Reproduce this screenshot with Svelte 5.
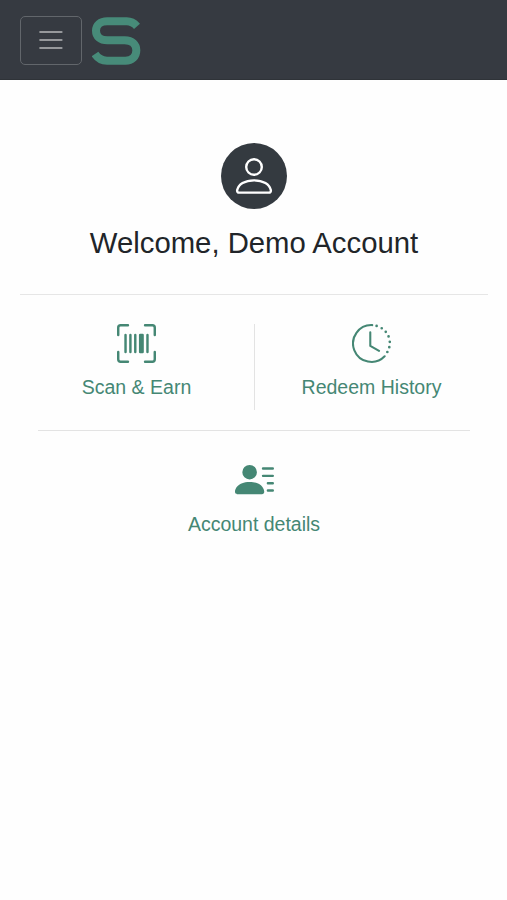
<script lang="ts">
  let name = "Demo Account";
  let menuOpen = false;
</script>

<nav>
  <button type="button" aria-label="Toggle navigation" aria-expanded={menuOpen} on:click={() => (menuOpen = !menuOpen)}>
    <svg viewBox="0 0 30 30" width="36" height="36">
      <path d="M4.8 7.5h20.2M4.8 15h20.2M4.8 22.5h20.2" />
    </svg>
  </button>
  <a class="brand" href="#home" aria-label="Home">
    <svg viewBox="0 0 147 144" width="49" height="48">
      <path d="M135 28C126 18 117 13 104 13H46C24 13 12 25 12 41C12 59 25 70 46 70H98C121 70 133 83 133 100C133 119 120 131 100 131H45C29 131 18 125 9 111" />
    </svg>
  </a>
</nav>

<main>
  <header>
    <div class="avatar">
      <svg viewBox="0 0 16 16" width="48" height="48">
        <circle cx="8" cy="5" r="2.6" />
        <path d="M3.1 13.55C2.55 13.55 2.3 13.2 2.4 12.7C2.8 10.8 4.9 9.45 8 9.45S13.2 10.8 13.6 12.7C13.7 13.2 13.45 13.55 12.9 13.55Z" />
      </svg>
    </div>
    <h1>Welcome, {name}</h1>
  </header>

  <div class="row">
    <a class="tile" href="#scan">
      <svg class="fill" viewBox="0 0 16 16" width="39" height="39">
        <path d="M1.5 1a.5.5 0 0 0-.5.5v3a.5.5 0 0 1-1 0v-3A1.5 1.5 0 0 1 1.5 0h3a.5.5 0 0 1 0 1zM11 .5a.5.5 0 0 1 .5-.5h3A1.5 1.5 0 0 1 16 1.5v3a.5.5 0 0 1-1 0v-3a.5.5 0 0 0-.5-.5h-3a.5.5 0 0 1-.5-.5M.5 11a.5.5 0 0 1 .5.5v3a.5.5 0 0 0 .5.5h3a.5.5 0 0 1 0 1h-3A1.5 1.5 0 0 1 0 14.5v-3a.5.5 0 0 1 .5-.5m15 0a.5.5 0 0 1 .5.5v3a1.5 1.5 0 0 1-1.5 1.5h-3a.5.5 0 0 1 0-1h3a.5.5 0 0 0 .5-.5v-3a.5.5 0 0 1 .5-.5M3 4.5a.5.5 0 0 1 1 0v7a.5.5 0 0 1-1 0zm2 0a.5.5 0 0 1 1 0v7a.5.5 0 0 1-1 0zm2 0a.5.5 0 0 1 1 0v7a.5.5 0 0 1-1 0zm2 0a.5.5 0 0 1 .5-.5h1a.5.5 0 0 1 .5.5v7a.5.5 0 0 1-.5.5h-1a.5.5 0 0 1-.5-.5zm3 0a.5.5 0 0 1 1 0v7a.5.5 0 0 1-1 0z" />
      </svg>
      <span>Scan &amp; Earn</span>
    </a>
    <a class="tile" href="#history">
      <svg class="line" viewBox="0 0 16 16" width="39" height="39">
        <path d="M8.3.45A7.55 7.55 0 1 0 13.4 13.25M7.5 3.4V9l3.6 2" />
        <path class="dots" d="M10.1.8h0M12.2 1.75h0M13.85 3.2h0M15 5.1h0M15.5 7.3h0M15.3 9.5h0M14.5 11.5h0" />
      </svg>
      <span>Redeem History</span>
    </a>
  </div>

  <a class="tile details" href="#account">
    <svg class="fill" viewBox="0 0 16 16" width="39" height="39">
      <path d="M6 8a3 3 0 1 0 0-6 3 3 0 0 0 0 6m-5 6s-1 0-1-1 1-4 6-4 6 3 6 4-1 1-1 1zM11 3.5a.5.5 0 0 1 .5-.5h4a.5.5 0 0 1 0 1h-4a.5.5 0 0 1-.5-.5m.5 2.5a.5.5 0 0 0 0 1h4a.5.5 0 0 0 0-1zm2 3a.5.5 0 0 0 0 1h2a.5.5 0 0 0 0-1zm0 3a.5.5 0 0 0 0 1h2a.5.5 0 0 0 0-1z" />
    </svg>
    <span>Account details</span>
  </a>
</main>

<style>
  :global(body) {
    margin: 0;
    background: #fefefe;
    font-family: "Liberation Sans", Arial, sans-serif;
    color: #212529;
  }

  svg {
    display: block;
    flex: none;
  }

  nav {
    box-sizing: border-box;
    height: 80px;
    padding: 0 20px;
    display: flex;
    align-items: center;
    gap: 10px;
    background-color: #363a41;
    border-bottom: 1px solid #2f3338;
  }
  nav button {
    box-sizing: border-box;
    width: 62px;
    height: 49px;
    margin-top: 1px;
    padding: 0;
    display: flex;
    align-items: center;
    justify-content: center;
    background: none;
    border: 1.5px solid #62666b;
    border-radius: 5px;
    cursor: pointer;
  }
  nav button path {
    stroke: #96989b;
    stroke-width: 1.8;
    stroke-linecap: round;
  }
  nav button svg {
    height: 32px;
  }
  .brand {
    margin-top: 2px;
  }
  .brand path {
    fill: none;
    stroke: #478b79;
    stroke-width: 24;
  }

  main {
    padding: 62px 19px 0 20px;
  }
  header {
    display: flex;
    flex-direction: column;
    align-items: center;
    padding-bottom: 33px;
    border-bottom: 1px solid #e6e6e6;
  }
  .avatar {
    width: 66px;
    height: 66px;
    margin-top: 0.5px;
    display: flex;
    align-items: center;
    justify-content: center;
    border-radius: 50%;
    background-color: #343a40;
  }
  .avatar svg {
    fill: none;
    stroke: white;
    stroke-width: 0.8;
  }
  h1 {
    margin: 16.5px 0 0;
    font-size: 29.3px;
    line-height: 36px;
    font-weight: 400;
    white-space: nowrap;
  }

  .row {
    margin: 0 18px;
    padding: 29px 0 20px;
    display: grid;
    grid-template-columns: 217px 1fr;
    border-bottom: 1px solid #e3e3e3;
  }
  .row .tile {
    height: 86px;
  }
  .row .tile:first-child {
    border-right: 1px solid #e3e3e3;
    padding-right: 19px;
  }
  .row .tile:last-child {
    padding-left: 18px;
  }
  .tile {
    display: flex;
    flex-direction: column;
    align-items: center;
    gap: 10px;
    color: #458774;
    font-size: 19.5px;
    line-height: 29px;
    text-decoration: none;
    white-space: nowrap;
  }
  .details {
    padding-top: 29px;
    gap: 11px;
  }
  .fill {
    fill: currentColor;
  }
  .line {
    fill: none;
    stroke: currentColor;
    stroke-width: 0.85;
    stroke-linecap: round;
    stroke-linejoin: round;
  }
  .dots {
    stroke-width: 1.1;
  }
</style>
